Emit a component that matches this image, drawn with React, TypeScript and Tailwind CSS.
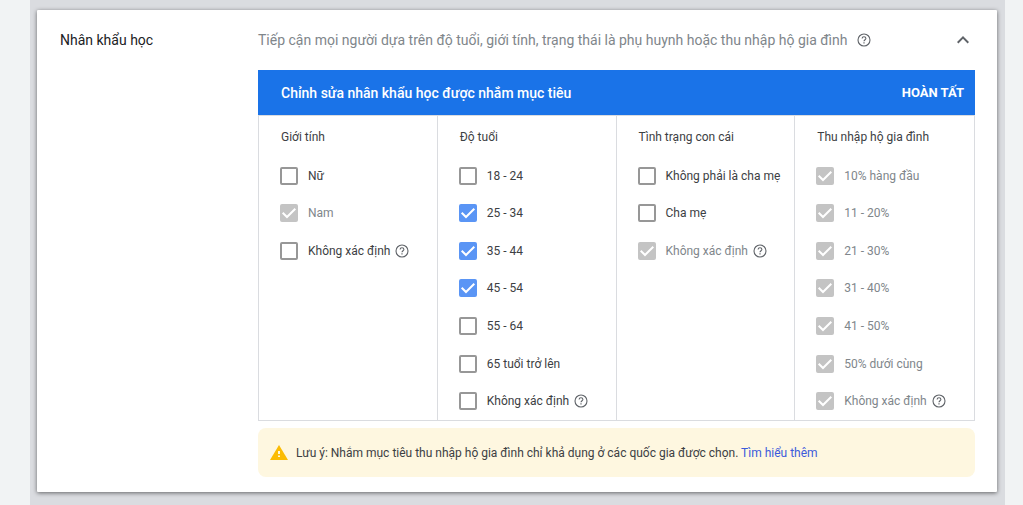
import { useState } from "react";

type Option = {
  label: string;
  checked?: boolean;
  disabled?: boolean;
  help?: boolean;
};

type Group = { id: string; title: string; options: Option[] };

const groups: Group[] = [
  {
    id: "gender",
    title: "Giới tính",
    options: [
      { label: "Nữ" },
      { label: "Nam", checked: true, disabled: true },
      { label: "Không xác định", help: true },
    ],
  },
  {
    id: "age",
    title: "Độ tuổi",
    options: [
      { label: "18 - 24" },
      { label: "25 - 34", checked: true },
      { label: "35 - 44", checked: true },
      { label: "45 - 54", checked: true },
      { label: "55 - 64" },
      { label: "65 tuổi trở lên" },
      { label: "Không xác định", help: true },
    ],
  },
  {
    id: "parental",
    title: "Tình trạng con cái",
    options: [
      { label: "Không phải là cha mẹ" },
      { label: "Cha mẹ" },
      { label: "Không xác định", checked: true, disabled: true, help: true },
    ],
  },
  {
    id: "income",
    title: "Thu nhập hộ gia đình",
    options: [
      { label: "10% hàng đầu", checked: true, disabled: true },
      { label: "11 - 20%", checked: true, disabled: true },
      { label: "21 - 30%", checked: true, disabled: true },
      { label: "31 - 40%", checked: true, disabled: true },
      { label: "41 - 50%", checked: true, disabled: true },
      { label: "50% dưới cùng", checked: true, disabled: true },
      { label: "Không xác định", checked: true, disabled: true, help: true },
    ],
  },
];

function HelpIcon({ className }: { className: string }) {
  return (
    <svg viewBox="0 0 16 16" fill="none" stroke="currentColor" className={className} aria-hidden="true">
      <circle cx="8" cy="8" r="6" strokeWidth="1.1" />
      <path
        d="M6.100 6.600 C6.100 5.300 7 4.700 8 4.700 C9.100 4.700 9.900 5.400 9.900 6.400 C9.900 7.600 8 7.900 8 9.300"
        strokeWidth="1.100"
      />
      <path d="M8 10.300 V11.500" strokeWidth="1.200" />
    </svg>
  );
}

function OptionRow({ option }: { option: Option }) {
  const [checked, setChecked] = useState(Boolean(option.checked));
  return (
    <li className="flex items-center">
      <label
        className={`flex items-center gap-[10px] ${option.disabled ? "text-[#80868b]" : "text-[#3c4043]"}`}
      >
        <span className="grid size-[18px] shrink-0">
          <input
            type="checkbox"
            checked={checked}
            disabled={option.disabled}
            onChange={(e) => setChecked(e.target.checked)}
            className="col-start-1 row-start-1 size-[18px] appearance-none rounded-[2px] border-2 border-[#979797] bg-white checked:border-[#5a95f5] checked:bg-[#5a95f5] disabled:border-[#c4c4c4] disabled:bg-[#c4c4c4]"
          />
          {checked && (
            <svg
              viewBox="0 0 18 18"
              fill="none"
              stroke="white"
              strokeWidth="2"
              className="pointer-events-none col-start-1 row-start-1 size-[18px]"
              aria-hidden="true"
            >
              <path d="M2.700 8.700 L7 13 L15.300 4.700" />
            </svg>
          )}
        </span>
        <span>{option.label}</span>
      </label>
      {option.help && <HelpIcon className="ml-1 size-4 shrink-0 text-[#5f6368]" />}
    </li>
  );
}

export default function App() {
  return (
    <div className="min-h-screen bg-[#f1f3f4] pr-[18px] pl-[30px] font-[Roboto,sans-serif]">
      <main className="min-h-screen bg-[#dadce0] pt-[10px] pr-2 pb-[13px] pl-[7px]">
        <section className="flex items-start rounded-[1px] bg-white pr-[22px] pb-[15px] pl-[23px] shadow-[0_1px_4px_rgba(0,0,0,0.55)]">
          <h2 className="w-[198px] shrink-0 pt-5 text-[14px] leading-5 text-[#202124]">
            Nhân khẩu học
          </h2>
          <div className="min-w-0 grow">
            <header className="flex h-[60px] items-center text-[14px] leading-5 text-[#80868b]">
              <p>
                Tiếp cận mọi người dựa trên độ tuổi, giới tính, trạng thái là phụ huynh hoặc thu
                nhập hộ gia đình
              </p>
              <HelpIcon className="ml-2 size-4 shrink-0 text-[#5f6368]" />
              <button type="button" aria-label="Thu gọn" className="ml-auto text-[#5f6368]">
                <svg viewBox="0 0 24 24" fill="currentColor" className="size-6">
                  <path d="M7.410 15.410 12 10.830l4.590 4.580L18 14l-6-6-6 6z" />
                </svg>
              </button>
            </header>

            <div className="flex h-[45px] items-center justify-between bg-[#1a73e8] pr-[11px] pl-[23px] text-white">
              <h3 className="text-[14px] leading-5 font-medium">
                Chỉnh sửa nhân khẩu học được nhắm mục tiêu
              </h3>
              <button type="button" className="text-[13px] leading-5 font-bold">
                HOÀN TẤT
              </button>
            </div>

            <div className="grid grid-cols-4 border border-[#dadce0] text-[12px] leading-4">
              {groups.map((group) => (
                <div
                  key={group.id}
                  role="group"
                  aria-labelledby={group.id}
                  className="border-[#dadce0] whitespace-nowrap not-last:border-r"
                >
                  <h4 id={group.id} className="pt-[13px] pl-[22px] text-[#3c4043]">
                    {group.title}
                  </h4>
                  <ul className="mt-3 grid h-[263px] grid-rows-7 pl-[21px]">
                    {group.options.map((option) => (
                      <OptionRow key={option.label} option={option} />
                    ))}
                  </ul>
                </div>
              ))}
            </div>

            <aside className="mt-[7px] flex h-[49px] items-center rounded-lg bg-[#fef7e0] pl-3 text-[12px] leading-4 text-[#3c4043]">
              <svg viewBox="0 0 18 18" className="mr-2 size-[18px] shrink-0" aria-hidden="true">
                <path fill="#fbbc04" d="M9 1 18 16H0z" />
                <path fill="#fef7e0" d="M8 7h2v3H8zM8 11.500h2v1.500H8z" />
              </svg>
              <p>
                Lưu ý: Nhắm mục tiêu thu nhập hộ gia đình chỉ khả dụng ở các quốc gia được chọn.{" "}
                <a href="#more" className="text-[#3b5bdb]">
                  Tìm hiểu thêm
                </a>
              </p>
            </aside>
          </div>
        </section>
      </main>
    </div>
  );
}
